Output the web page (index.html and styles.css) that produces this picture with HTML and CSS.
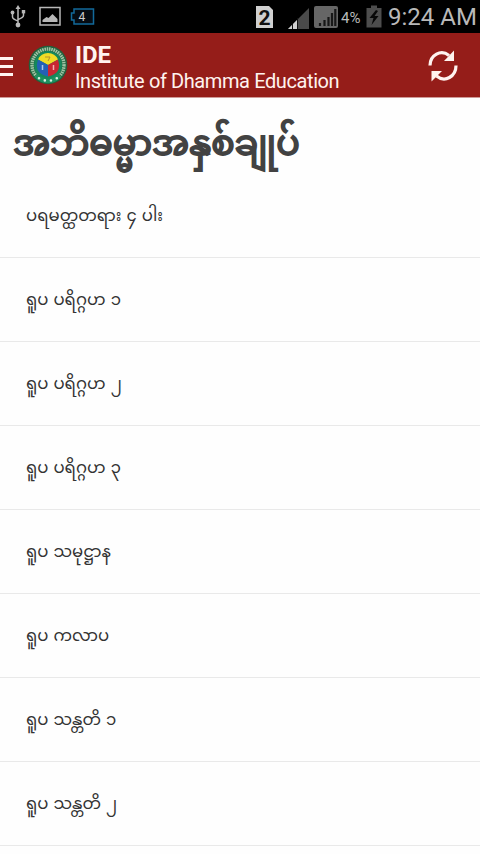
FILE: index.html
```html
<!DOCTYPE html>
<html lang="my">
<head>
    <meta charset="UTF-8">
    <meta name="viewport" content="width=device-width, initial-scale=1.0">
    <title>IDE - Institute of Dhamma Education</title>
    <link rel="stylesheet" href="styles.css">
</head>
<body>
    <div class="status-bar">
        <!-- usb, picture, battery -->
        <svg class="status-icons" width="100" height="33" viewBox="0 0 100 33">
            <g fill="none" stroke="#b8b8b8" stroke-width="1.500">
                <path d="M18 7v18M12.500 13v4q0 2 5.500 4M23.500 12v3.500q0 2-5.500 4"/>
                <rect x="40" y="7.500" width="20" height="17.500"/>
            </g>
            <g fill="#b8b8b8">
                <path d="M18 5l-2.500 4h5z"/>
                <circle cx="12.500" cy="12.500" r="1.900"/>
                <rect x="21.800" y="10" width="3.400" height="3.400"/>
                <circle cx="18" cy="25" r="2.400"/>
                <path d="M42.500 22v-2l4-3 2 1 4-4 5 5v3z"/>
            </g>
            <path d="M74 9h19.500v15H74v-4h-2.500v-7H74z" fill="#050b12" stroke="#12699a" stroke-width="1.500"/>
            <text class="battery-count" x="78.500" y="21">4</text>
        </svg>
        <div class="status-right">
            <!-- sim, signals -->
            <svg width="84" height="33" viewBox="255 0 84 33">
                <path d="M256 6h13l4 4v18h-17z" fill="#d0d0d0"/>
                <text class="sim-number" x="258.500" y="24.500">2</text>
                <path d="M309 8v21h-21z" fill="#4a4a4a"/>
                <path d="M297.500 19.500V29H288z" fill="#d0d0d0"/>
                <path d="M292.500 24v5M297.500 18v11" stroke="#111" stroke-width="1"/>
                <rect x="314" y="6" width="24" height="22" rx="2" fill="#666"/>
                <path d="M320 26v-3M324.500 26v-6M328.500 26v-9M332 26V13M335.300 26V9" stroke="#171717" stroke-width="2.200"/>
            </svg>
            <span class="percent">4%</span>
            <svg class="charging" width="16" height="33" viewBox="0 0 16 33">
                <path d="M5 5.500h6V8h4.500v19.500h-15V8H5z" fill="#4d4d4d"/>
                <path d="M10 10l-6.500 8h4l-2 7 7-9H8.500L12 11z" fill="#080808"/>
            </svg>
            <span class="clock">9:24 AM</span>
        </div>
    </div>

    <div class="header">
        <div class="menu">
            <span></span>
            <span></span>
            <span></span>
        </div>
        <svg class="logo" width="40" height="40" viewBox="0 0 40 40">
            <circle cx="20" cy="20" r="19.300" fill="#23603c"/>
            <circle cx="20" cy="20" r="16" fill="none" stroke="#9cc5a4" stroke-width="3.400" stroke-dasharray="1.600 .7"/>
            <circle cx="20" cy="20" r="14" fill="#14885c"/>
            <path d="M20 20L10 14.500Q13 8 20 8T30 14.500z" fill="#f0dc25"/>
            <path d="M20 20v11.500Q8 29 9 19L10 14.500z" fill="#2460b5"/>
            <path d="M20 20v11.500Q32 29 31 19L30 14.500z" fill="#c92732"/>
            <path d="M17 12h5l-2 4" fill="none" stroke="#b6912c"/>
            <path d="M14.500 20v5" stroke="#a9c6e8" stroke-width="1.500"/>
            <path d="M25.500 20v5" stroke="#f7b0b0" stroke-width="1.500"/>
            <path d="M8 30.500Q20 41.500 32 30.500" fill="none" stroke="#1c9160" stroke-width="4.500"/>
            <path d="M11 33.200Q20 38.200 29 33.200" fill="none" stroke="#d7eee0" stroke-width="2.600" stroke-linecap="round" stroke-dasharray="0 6.200"/>
        </svg>
        <div class="titles">
            <h1>IDE</h1>
            <p>Institute of Dhamma Education</p>
        </div>
        <svg class="refresh" width="32" height="34" viewBox="0 0 32 34">
            <g fill="none" stroke="#fff3ef" stroke-width="3.200">
                <path d="M3 16.500C3 6 14 0 22 6.500"/>
                <path d="M29 16.500C29 27.500 18 34 9.500 27"/>
            </g>
            <path d="M27 1.500v10.500H17z" fill="#fff3ef"/>
            <path d="M4.500 32.500V22H15z" fill="#fff3ef"/>
        </svg>
    </div>

    <div class="content">
        <h2>အဘိဓမ္မာအနှစ်ချုပ်</h2>
        <ul class="lessons">
            <li><span>ပရမတ္ထတရား ၄ ပါး</span></li>
            <li><span>ရူပ ပရိဂ္ဂဟ ၁</span></li>
            <li><span>ရူပ ပရိဂ္ဂဟ ၂</span></li>
            <li><span>ရူပ ပရိဂ္ဂဟ ၃</span></li>
            <li><span>ရူပ သမုဋ္ဌာန</span></li>
            <li><span>ရူပ ကလာပ</span></li>
            <li><span>ရူပ သန္တတိ ၁</span></li>
            <li><span>ရူပ သန္တတိ ၂</span></li>
        </ul>
    </div>
</body>
</html>
```
FILE: styles.css
```css
:root {
    --primary-color: #951d19;
    --text-color: #424242;
    --line-color: #e9e9e9;
}

* {
    box-sizing: border-box;
}

body {
    font-family: Roboto, "Noto Sans Myanmar", "Padauk", sans-serif;
    background-color: #fefefe;
    color: var(--text-color);
    margin: 0;
    height: 854px;
    overflow: hidden;
}

svg {
    display: block;
    flex: none;
}

.status-bar {
    display: flex;
    justify-content: space-between;
    height: 33px;
    background-color: #000;
    color: #b9b9b9;
}

.battery-count {
    font-size: 12px;
    fill: #ccc;
}

.sim-number {
    font-size: 21px;
    font-weight: 700;
    fill: #111;
}

.status-right {
    display: flex;
    align-items: center;
    padding-right: 3px;
    white-space: nowrap;
}

.percent {
    width: 25px;
    margin-left: 2px;
    padding-top: 2px;
    font-size: 15px;
}

.clock {
    width: 89px;
    margin-left: 6px;
    font-size: 24px;
}

.header {
    display: flex;
    height: 65px;
    background-color: var(--primary-color);
    border-bottom: 1px solid #cf9b98;
    color: #fff3ef;
}

.menu {
    display: flex;
    flex-direction: column;
    gap: 5px;
    width: 28px;
    padding-top: 24px;
}

.menu span {
    width: 13px;
    height: 3px;
    background-color: #fff3ef;
}

.logo {
    margin-top: 12px;
}

.titles {
    flex: 1;
    padding: 8px 0 0 7px;
}

.titles h1 {
    margin: 0;
    font-size: 24px;
    font-weight: 700;
    line-height: 28px;
}

.titles p {
    margin: 0;
    font-size: 20px;
    letter-spacing: -0.4px;
    line-height: 24px;
    white-space: nowrap;
}

.refresh {
    margin: 16px 21px 0 0;
}

.content h2 {
    height: 76px;
    margin: 0;
    padding-left: 13px;
    font-size: 34.8px;
    font-weight: 400;
    line-height: 90px;
    white-space: nowrap;
    -webkit-text-stroke: 1.8px var(--text-color);
}

.lessons {
    margin: 0;
    padding: 0;
    list-style: none;
}

.lessons li {
    display: flex;
    align-items: center;
    height: 84px;
    padding-left: 26px;
    border-bottom: 1px solid var(--line-color);
    color: #333;
    font-size: 16.5px;
    line-height: 30px;
    word-spacing: 1px;
    white-space: nowrap;
}
```
